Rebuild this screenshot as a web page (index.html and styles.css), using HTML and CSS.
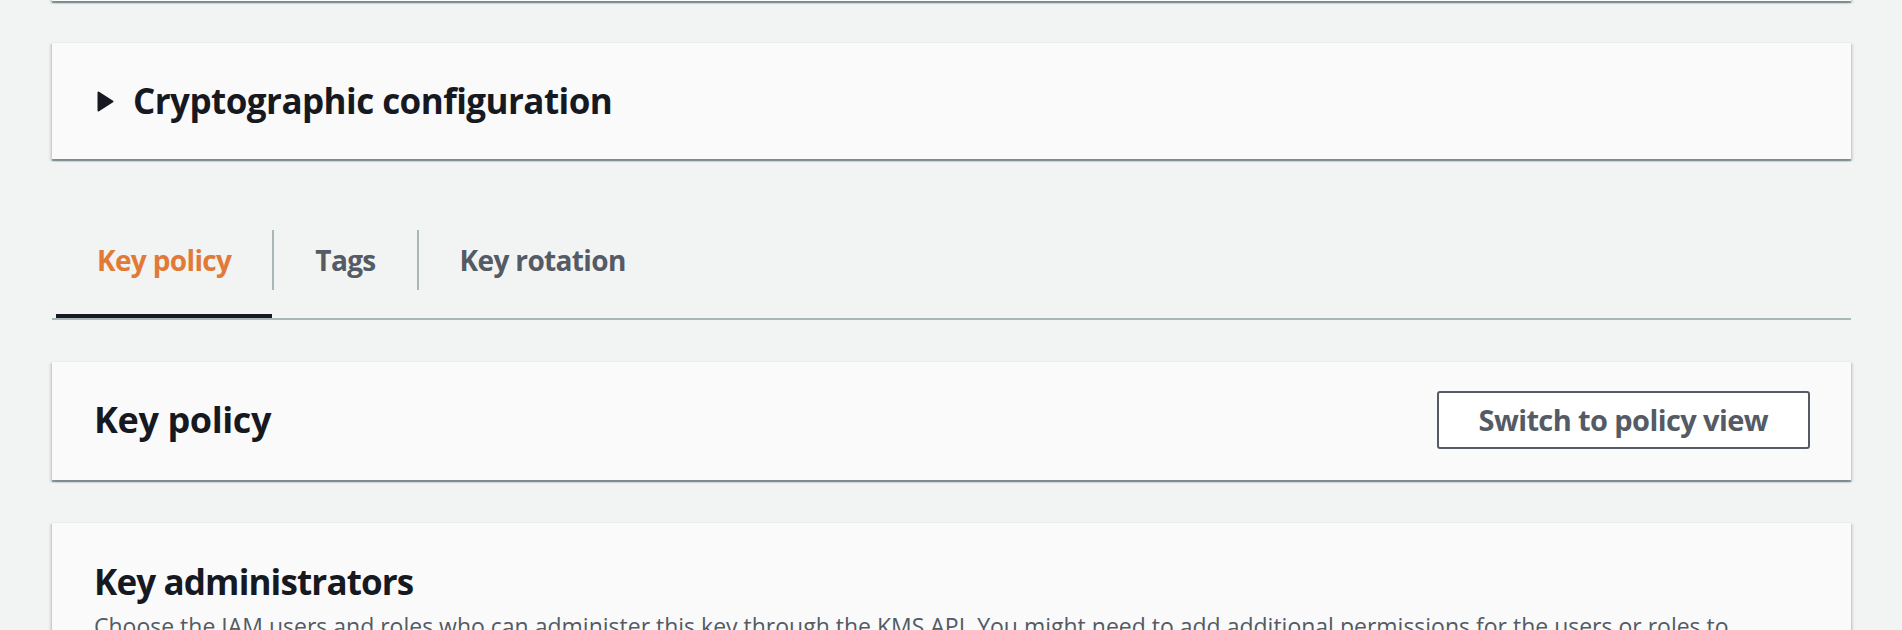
FILE: index.html
```html
<!DOCTYPE html>
<html lang="en">
<head>
<meta charset="utf-8">
<title>Key policy</title>
<link rel="stylesheet" href="styles.css">
</head>
<body>
<div class="page">
  <div class="card card-top"></div>

  <div class="card card-expand">
    <svg class="caret" width="17" height="21" viewBox="0 0 17 21" aria-hidden="true"><path d="M1.5 1.5 L15.5 10.5 L1.5 19.5 Z" fill="#16191f" stroke="#16191f" stroke-width="2" stroke-linejoin="round"/></svg>
    <h2 class="heading">Cryptographic configuration</h2>
  </div>

  <ul class="tabs">
    <li class="tab tab-active"><span class="tab-label">Key policy</span></li>
    <li class="tab"><span class="tab-label tab-sep">Tags</span></li>
    <li class="tab"><span class="tab-label tab-sep">Key rotation</span></li>
  </ul>

  <div class="card card-header">
    <h2 class="heading heading-lg">Key policy</h2>
    <button class="btn">Switch to policy view</button>
  </div>

  <div class="card card-section">
    <h2 class="heading heading-tight">Key administrators</h2>
    <p class="desc">Choose the IAM users and roles who can administer this key through the KMS API. You might need to add additional permissions for the users or roles to administer this key from this console.</p>
  </div>
</div>
</body>
</html>
```

FILE: styles.css
```css
html, body {
  margin: 0;
  padding: 0;
  background: #f2f3f3;
  font-family: "Open Sans", "Noto Sans", sans-serif;
  color: #16191f;
  overflow: hidden;
}

.page {
  padding: 0 51px 0 52px;
  display: flex;
  flex-direction: column;
}

.card {
  background: #fafafa;
  border-top: 1px solid #eaeded;
  box-shadow: 0 2px 1px rgba(0, 28, 36, 0.35), 2px 2px 2px rgba(0, 28, 36, 0.12), -2px 2px 2px rgba(0, 28, 36, 0.12);
}

.card-top {
  height: 200px;
  margin-top: -200px;
}

.heading {
  margin: 0;
  font-size: 35px;
  line-height: 40px;
  font-weight: 700;
  letter-spacing: -0.55px;
}

.heading-lg {
  font-size: 36px;
  letter-spacing: -0.4px;
}

.heading-tight {
  letter-spacing: -0.85px;
}

.card-expand {
  margin-top: 41px;
  display: flex;
  align-items: center;
  padding: 38px 40px 38px 45px;
}

.caret {
  display: block;
  margin-right: 19px;
  flex: none;
}

.tabs {
  list-style: none;
  margin: 41px 0 0 0;
  padding: 0 0 0 4px;
  display: flex;
  border-bottom: 2px solid #aab7b8;
}

.tab {
  padding: 30px 0 24px;
  border-bottom: 4px solid transparent;
}

.tab-active {
  border-bottom-color: #16191f;
}

.tab-label {
  display: block;
  padding: 10px 41px;
  font-size: 28px;
  line-height: 40px;
  font-weight: 700;
  color: #545b64;
  letter-spacing: -0.65px;
}

.tab-active .tab-label {
  color: #e07a36;
}

.tab-sep {
  border-left: 2px solid #aab7b8;
}

.card-header {
  margin-top: 41px;
  display: flex;
  align-items: center;
  justify-content: space-between;
  padding: 29px 41px 31px 42px;
}

.btn {
  font-family: inherit;
  font-size: 29px;
  line-height: 40px;
  font-weight: 700;
  color: #545b64;
  background: #ffffff;
  border: 2px solid #545b64;
  border-radius: 3px;
  padding: 7px 40px;
  letter-spacing: -0.6px;
  cursor: pointer;
}

.card-section {
  margin-top: 42px;
  padding: 39px 42px 40px 42px;
}

.desc {
  margin: 8px 0 0;
  font-size: 23px;
  line-height: 32px;
  color: #545b64;
}
```
